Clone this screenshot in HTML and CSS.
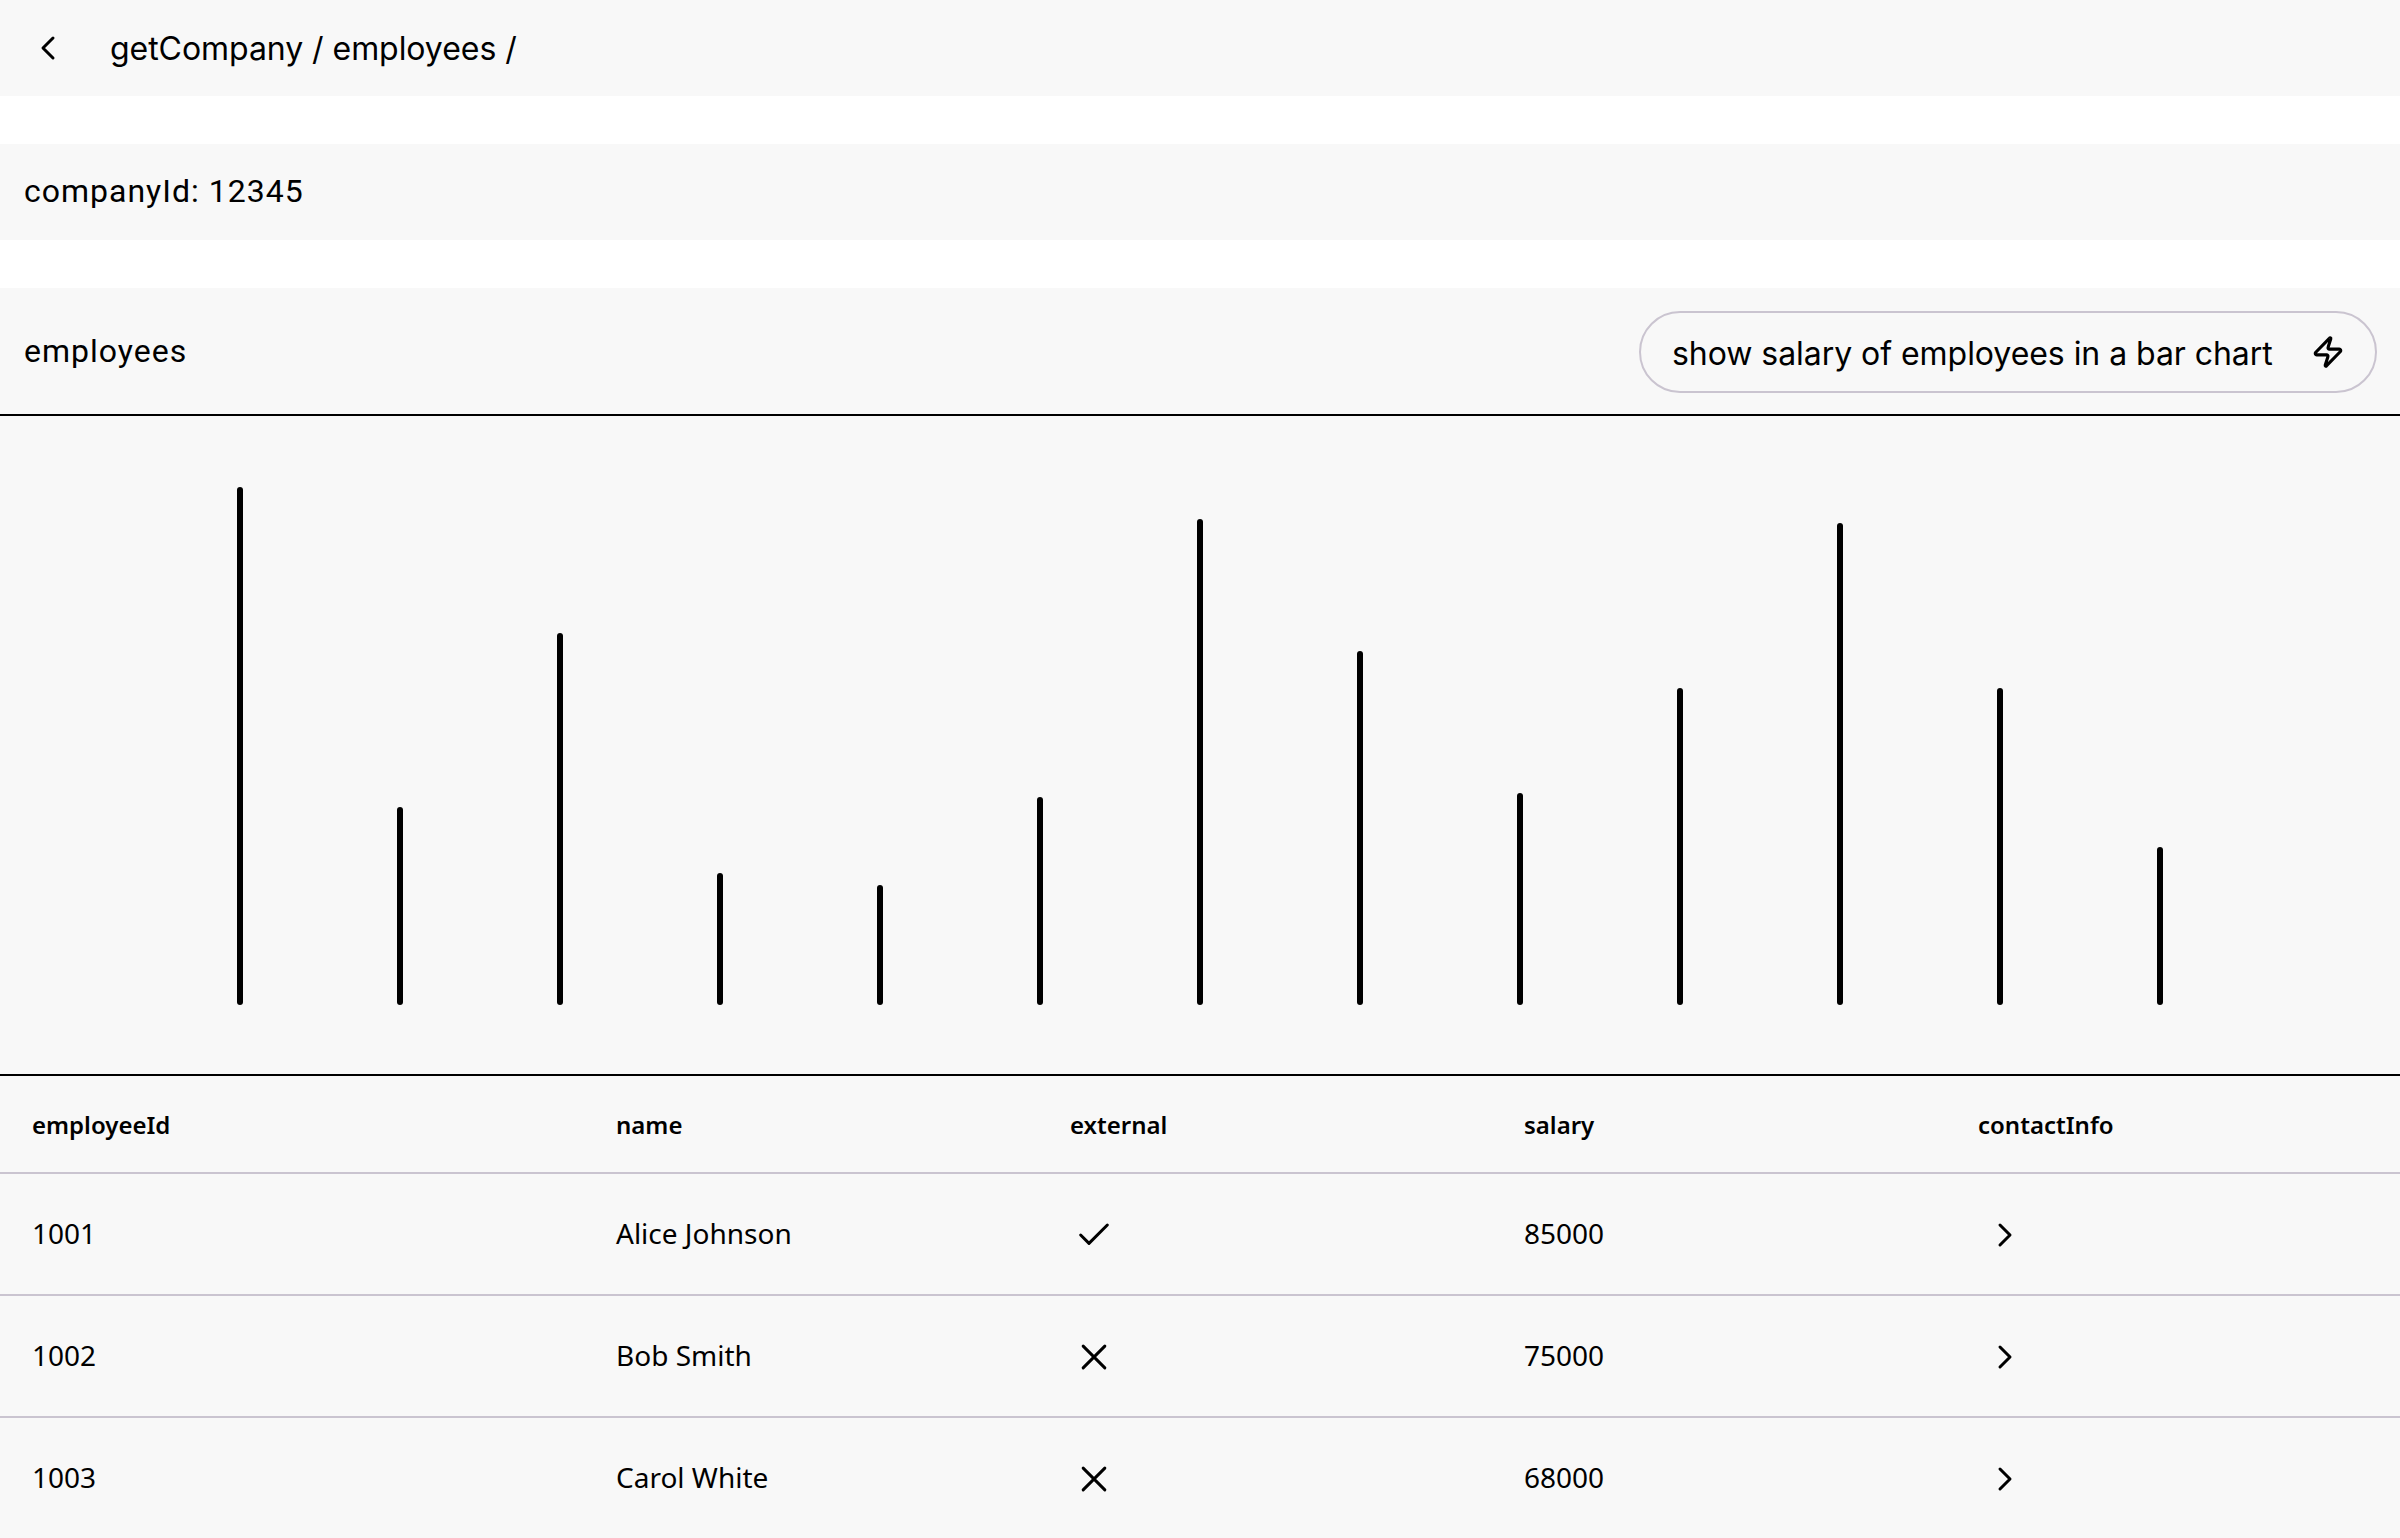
FILE: index.html
```html
<!DOCTYPE html>
<html lang="en">
  <head>
    <meta charset="utf-8" />
    <title>getCompany / employees</title>
    <link rel="stylesheet" href="styles.css">
  </head>

  <body>
    <header class="topbar">
      <button class="back-button" aria-label="Back">
        <svg class="icon" viewBox="0 0 24 24"><path d="m15 18-6-6 6-6" /></svg>
      </button>
      <span class="crumbs">getCompany / employees /</span>
    </header>

    <section class="param-band">companyId: 12345</section>

    <section class="result">
      <div class="result-head">
        <span class="result-title">employees</span>
        <div class="prompt">
          <span class="prompt-text">show salary of employees in a bar chart</span>
          <svg class="icon icon-bolt" viewBox="0 0 24 24"><path d="M4 14a1 1 0 0 1-.78-1.63l9.9-10.2a.5.5 0 0 1 .86.46l-1.92 6.02A1 1 0 0 0 13 10h7a1 1 0 0 1 .78 1.63l-9.9 10.2a.5.5 0 0 1-.86-.46l1.92-6.02A1 1 0 0 0 11 14z" /></svg>
        </div>
      </div>

      <div class="chart">
        <div class="bar-slot"><div class="bar" style="height: 518px"></div></div>
        <div class="bar-slot"><div class="bar" style="height: 198px"></div></div>
        <div class="bar-slot"><div class="bar" style="height: 372px"></div></div>
        <div class="bar-slot"><div class="bar" style="height: 132px"></div></div>
        <div class="bar-slot"><div class="bar" style="height: 120px"></div></div>
        <div class="bar-slot"><div class="bar" style="height: 208px"></div></div>
        <div class="bar-slot"><div class="bar" style="height: 486px"></div></div>
        <div class="bar-slot"><div class="bar" style="height: 354px"></div></div>
        <div class="bar-slot"><div class="bar" style="height: 212px"></div></div>
        <div class="bar-slot"><div class="bar" style="height: 317px"></div></div>
        <div class="bar-slot"><div class="bar" style="height: 482px"></div></div>
        <div class="bar-slot"><div class="bar" style="height: 317px"></div></div>
        <div class="bar-slot"><div class="bar" style="height: 158px"></div></div>
      </div>

      <table class="data-table">
        <thead>
          <tr>
            <th>employeeId</th>
            <th>name</th>
            <th>external</th>
            <th>salary</th>
            <th>contactInfo</th>
          </tr>
        </thead>
        <tbody>
          <tr>
            <td>1001</td>
            <td>Alice Johnson</td>
            <td><svg class="icon icon-flag" viewBox="0 0 24 24"><path d="M20 6 9 17l-5-5" /></svg></td>
            <td>85000</td>
            <td><svg class="icon icon-open" viewBox="0 0 24 24"><path d="m9 18 6-6-6-6" /></svg></td>
          </tr>
          <tr>
            <td>1002</td>
            <td>Bob Smith</td>
            <td><svg class="icon icon-flag" viewBox="0 0 24 24"><path d="M18.5 5.5 5.5 18.5M5.5 5.5l13 13" /></svg></td>
            <td>75000</td>
            <td><svg class="icon icon-open" viewBox="0 0 24 24"><path d="m9 18 6-6-6-6" /></svg></td>
          </tr>
          <tr>
            <td>1003</td>
            <td>Carol White</td>
            <td><svg class="icon icon-flag" viewBox="0 0 24 24"><path d="M18.5 5.5 5.5 18.5M5.5 5.5l13 13" /></svg></td>
            <td>68000</td>
            <td><svg class="icon icon-open" viewBox="0 0 24 24"><path d="m9 18 6-6-6-6" /></svg></td>
          </tr>
        </tbody>
      </table>
    </section>
  </body>
</html>
```

FILE: styles.css
```css
html {
  background: #fff;
}
body {
  margin: 0;
  height: 1538px;
  overflow: hidden;
  color: #000;
  font-family: "Roboto", sans-serif;
}
.icon {
  display: block;
  width: 40px;
  height: 40px;
  fill: none;
  stroke: #000;
  stroke-width: 1.8;
  stroke-linecap: round;
  stroke-linejoin: round;
}
.icon-bolt {
  width: 34px;
  height: 34px;
  stroke-width: 2.2;
}
.icon-flag {
  margin: 3px 0 0 4px;
}
.icon-open {
  margin: 3px 0 0 7px;
}
.topbar {
  display: flex;
  align-items: center;
  height: 96px;
  background: #f8f8f8;
}
.back-button {
  display: flex;
  padding: 0;
  margin-left: 28px;
  border: 0;
  background: none;
}
.crumbs {
  margin-left: 42px;
  font-family: "Inter", sans-serif;
  font-size: 32px;
  letter-spacing: -0.05px;
}
.param-band {
  display: flex;
  align-items: center;
  box-sizing: border-box;
  height: 96px;
  margin-top: 48px;
  padding: 0 0 2px 24px;
  background: #f8f8f8;
  font-size: 32px;
  letter-spacing: 1px;
}
.result {
  margin-top: 48px;
  background: #f8f8f8;
}
.result-head {
  display: flex;
  align-items: center;
  justify-content: space-between;
  height: 126px;
  padding: 0 23px 0 24px;
  border-bottom: 2px solid #000;
  font-size: 32px;
  letter-spacing: 1px;
}
.prompt {
  display: flex;
  align-items: center;
  justify-content: space-between;
  box-sizing: border-box;
  width: 738px;
  height: 82px;
  margin-top: 2px;
  padding: 0 30px 0 31px;
  border: 2px solid #cac4d0;
  border-radius: 41px;
}
.prompt-text {
  padding-top: 2px;
  font-family: "Inter", sans-serif;
  font-size: 32px;
  letter-spacing: -0.05px;
}
.chart {
  display: flex;
  align-items: flex-end;
  box-sizing: border-box;
  height: 660px;
  padding: 0 160px 69px;
  border-bottom: 2px solid #000;
}
.bar-slot {
  display: flex;
  flex: 1;
  justify-content: center;
}
.bar {
  width: 6px;
  border-radius: 3px;
  background: #000;
}
.data-table {
  width: 2400px;
  border-collapse: separate;
  border-spacing: 0;
  table-layout: fixed;
  font-family: "Noto Sans", sans-serif;
  font-size: 28px;
  text-align: left;
}
.data-table th,
.data-table td {
  box-sizing: border-box;
  width: 454px;
  padding: 0;
  border-bottom: 2px solid #cac4d0;
}
.data-table th {
  height: 98px;
  font-size: 24px;
  font-weight: 600;
}
.data-table td {
  height: 122px;
  padding-bottom: 2px;
}
.data-table th:first-child,
.data-table td:first-child {
  width: 616px;
  padding-left: 32px;
}
.data-table th:last-child,
.data-table td:last-child {
  width: 422px;
}
```
